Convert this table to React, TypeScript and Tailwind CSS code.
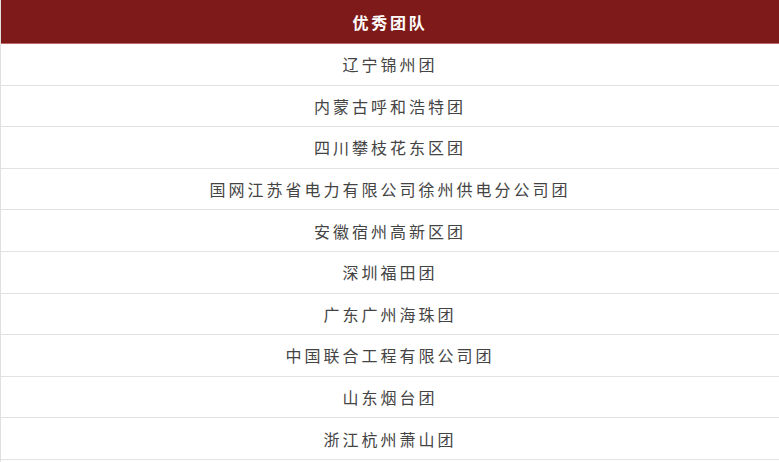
import React from "react";

const rows = [
  "辽宁锦州团",
  "内蒙古呼和浩特团",
  "四川攀枝花东区团",
  "国网江苏省电力有限公司徐州供电分公司团",
  "安徽宿州高新区团",
  "深圳福田团",
  "广东广州海珠团",
  "中国联合工程有限公司团",
  "山东烟台团",
  "浙江杭州萧山团",
];

export default function App() {
  return (
    <div
      className="w-[779px] h-[462px] bg-white border-l border-[#e0e0e0]"
      style={{ fontFamily: '"Noto Sans CJK SC", "Noto Sans", sans-serif' }}
    >
      <div className="h-[44px] bg-[#7f1a1a] border-b border-[#b86a6a] flex items-center justify-center text-white font-bold text-[16px] tracking-[2.7px]">
        优秀团队
      </div>
      {rows.map((r) => (
        <div
          key={r}
          className="h-[41.6px] border-b border-[#e2e2e2] flex items-center justify-center text-[#444] text-[16px] tracking-[3px]"
        >
          {r}
        </div>
      ))}
    </div>
  );
}
